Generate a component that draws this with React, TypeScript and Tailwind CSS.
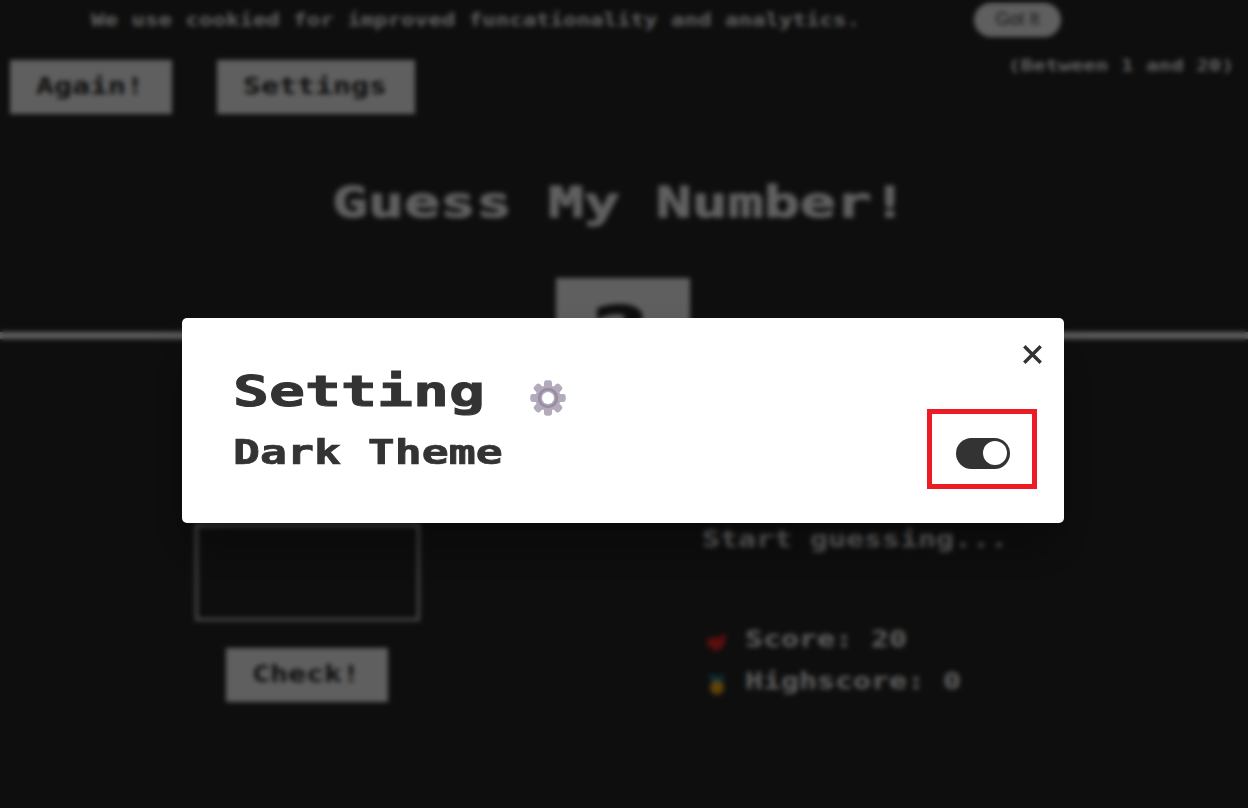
import React from 'react';

type WideProps = { children: string; className: string; scale?: string };

// Wide monospaced display lettering: the face is stretched to nearly square cells.
function Wide({ children, className, scale = 'scale-x-[1.329]' }: WideProps) {
  return (
    <span
      className={`block origin-left whitespace-pre font-['DejaVu_Sans_Mono','Liberation_Mono',monospace] font-bold leading-none ${scale} ${className}`}
    >
      {children}
    </span>
  );
}

function GameButton({ label, className }: { label: string; className: string }) {
  return (
    <button className={`flex h-[54px] items-center bg-[#eee] pb-0.5 pl-[26px] text-[#222] ${className}`}>
      <Wide className="text-[22.5px]">{label}</Wide>
    </button>
  );
}

function Gear() {
  return (
    <svg viewBox="0 0 36 36" className="h-9 w-9">
      {[0, 45, 90, 135].map((angle) => (
        <rect key={angle} x="14" y="0.3" width="8" height="35.4" rx="2.4" fill="#b3aabc" transform={`rotate(${angle} 18 18)`} />
      ))}
      <circle cx="18" cy="18" r="12.7" fill="#b3aabc" />
      <circle cx="18" cy="18" r="10.2" fill="#998da3" />
      <circle cx="18" cy="18" r="7.4" fill="#b3aabc" />
      <circle cx="18" cy="18" r="6" fill="#fff" />
    </svg>
  );
}

function Explosion() {
  return (
    <svg viewBox="0 0 22 20" className="h-5 w-[22px]">
      <path d="M1 7 6 4l5 1 3-2 6-2-1 6-1 6-4 4-5 1-4-3-4-3z" fill="#dd2622" />
    </svg>
  );
}

function Medal() {
  return (
    <svg viewBox="0 0 22 22" className="h-[22px] w-[22px]">
      <path d="M3 1h6l2 4 3-4h5l-4 8H7z" fill="#1887a8" />
      <circle cx="11" cy="13.500" r="7" fill="#f2a51b" />
    </svg>
  );
}

function Game() {
  return (
    <div className="flex h-full flex-col bg-[#242424] text-[#eee]">
      <header className="relative h-[339px] border-b-[7px] border-[#eee]">
        <div className="flex h-10 items-center pl-[91px]">
          <div className="w-[883px]">
            <Wide className="w-[600px] text-[16.86px]">
              We use cookied for improved funcationality and analytics.
            </Wide>
          </div>
          <button className="h-[34px] w-[87px] rounded-full bg-[#eee] pb-0.5 font-['Liberation_Sans',sans-serif] text-[18px] text-[#333]">
            Got It
          </button>
        </div>
        <div className="mt-5 flex items-start pl-2.5">
          <GameButton label="Again!" className="w-[162px]" />
          <GameButton label="Settings" className="ml-[45px] w-[198px]" />
          <div className="-mt-[2px] ml-[593px] w-[226px]">
            <Wide className="w-[172px] text-[15.7px]">(Between 1 and 20)</Wide>
          </div>
        </div>
        <h1 className="mt-[67px] pl-[332px]">
          <Wide scale="scale-x-[1.39]" className="w-[414px] text-[43px] [-webkit-text-stroke:1px_currentColor]">Guess My Number!</Wide>
        </h1>
        <div className="absolute left-[556px] top-[278px] flex h-[114px] w-[134px] justify-center bg-[#eee] pr-2.5 pt-[20px] text-[#222]">
          <span className="block scale-x-[1.5] font-['DejaVu_Sans_Mono',monospace] text-[70px] font-bold leading-none [-webkit-text-stroke:2px_currentColor]">?</span>
        </div>
      </header>
      <main className="flex flex-1">
        <section className="flex w-[702px] flex-col pl-[195px] pt-[185px]">
          <input aria-label="Guess" className="h-[97px] w-[225px] border-[3px] border-[#bbb] bg-transparent" />
          <GameButton label="Check!" className="ml-[31px] mt-[27px] w-[162px]" />
        </section>
        <section className="w-[540px] pt-[189px]">
          <Wide className="w-[240px] text-[22.5px]">Start guessing...</Wide>
          <div className="mt-[68px] flex h-[42px] items-center">
            <div className="ml-[4px] mt-1.5 w-[39px]"><Explosion /></div>
            <Wide className="w-[160px] text-[22.5px]">Score: 20</Wide>
          </div>
          <div className="flex h-[42px] items-center">
            <div className="ml-[4px] mt-1.5 w-[39px]"><Medal /></div>
            <Wide className="w-[180px] text-[22.5px]">Highscore: 0</Wide>
          </div>
        </section>
      </main>
    </div>
  );
}

function SettingsModal() {
  return (
    <div className="flex h-[204.5px] w-[882px] justify-between rounded-[5px] bg-white text-[#333] shadow-[0_30px_50px_rgba(0,0,0,0.3)]">
      <div className="pl-[51.5px] pt-[52px]">
        <div className="flex h-[56px] items-start">
          <div className="w-[297px]">
            <Wide scale="scale-x-[1.39]" className="w-[182px] text-[43px] [-webkit-text-stroke:1px_currentColor]">Setting</Wide>
          </div>
          <div className="mt-2.5"><Gear /></div>
        </div>
        <div className="mt-2.5">
          <Wide scale="scale-x-[1.35]" className="w-[200px] text-[33.2px] [-webkit-text-stroke:0.7px_currentColor]">Dark Theme</Wide>
        </div>
      </div>
      <div className="flex w-[136.5px] flex-col">
        <button aria-label="Close" className="ml-[96px] mt-[27px] h-[19px] w-[19px]">
          <svg viewBox="0 0 19 19" className="h-[19px] w-[19px]" stroke="#333" strokeWidth="3.4">
            <path d="M1.300 1.300 17.700 17.700M17.700 1.300 1.300 17.700" />
          </svg>
        </button>
        <div className="mt-[45px] flex h-20 w-[110px] items-center border-[5px] border-[#ed1c24] pl-[23.5px]">
          <button role="switch" aria-checked="true" aria-label="Dark Theme" className="mt-2 flex h-[31px] w-[54px] items-center justify-end rounded-full bg-[#333] pr-[3px]">
            <span className="h-[23.5px] w-[23.5px] rounded-full bg-white" />
          </button>
        </div>
      </div>
    </div>
  );
}

export default function App() {
  return (
    <div className="relative h-[808px] w-[1248px] overflow-hidden">
      <Game />
      <div className="absolute inset-0 bg-black/60 pl-[181.5px] pt-[318px] backdrop-blur-[2.4px]">
        <SettingsModal />
      </div>
    </div>
  );
}
